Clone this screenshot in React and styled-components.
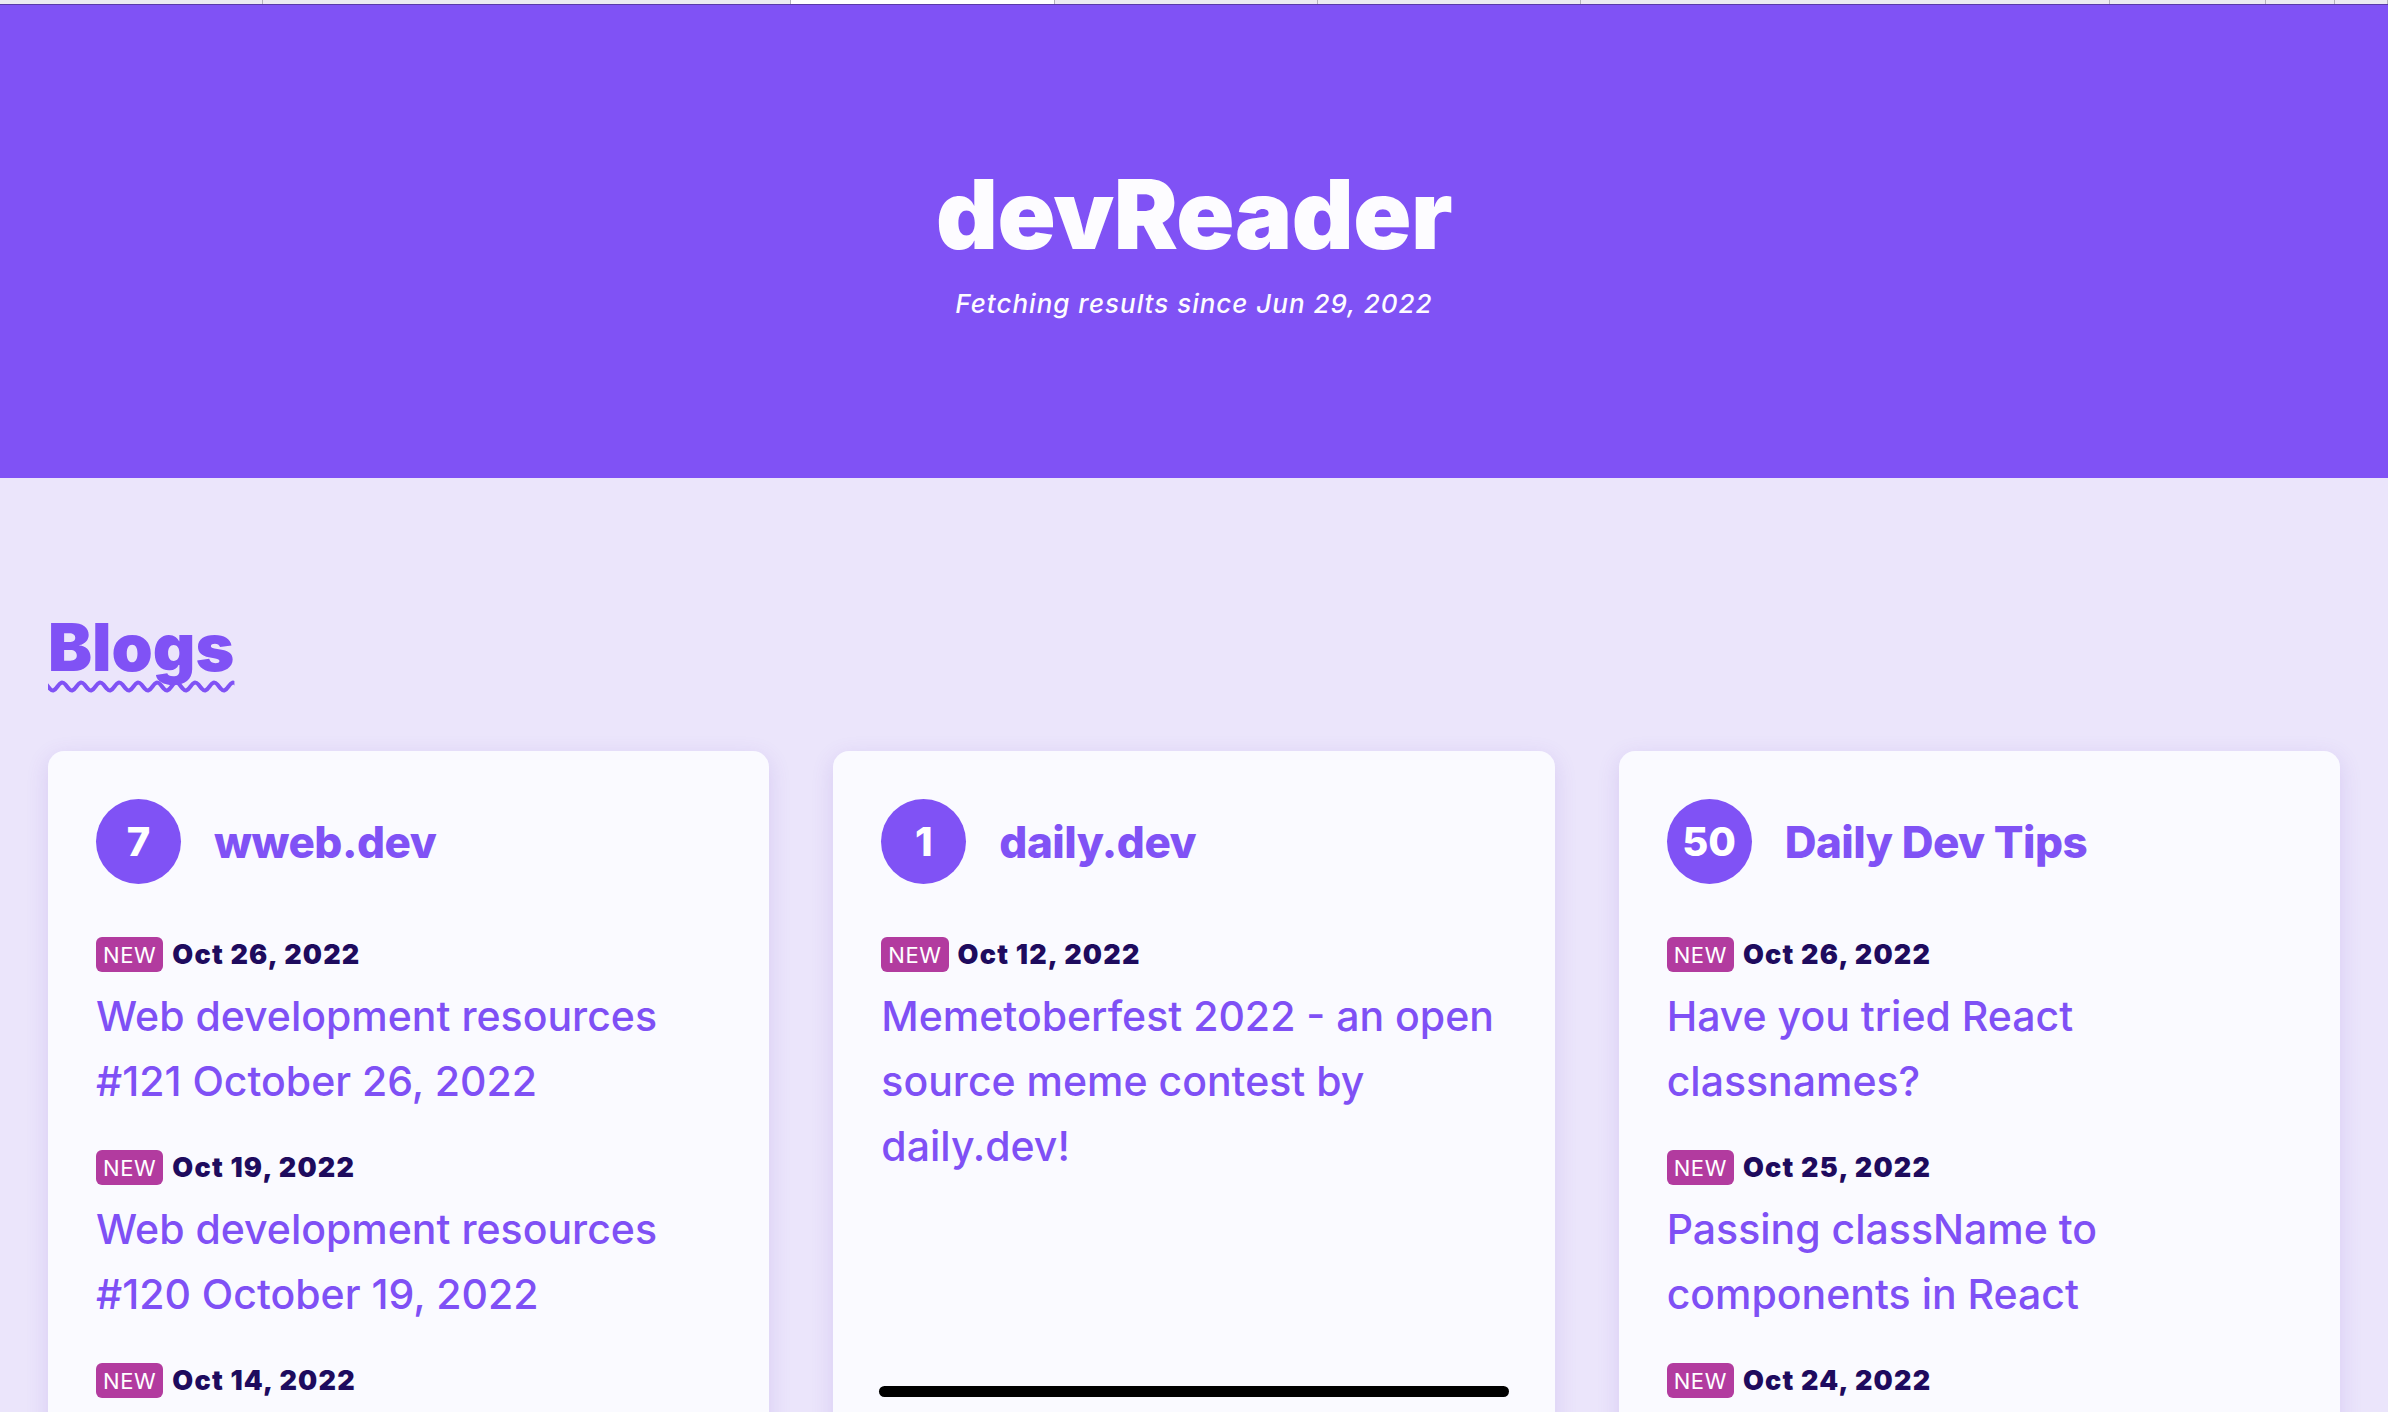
import React from 'react';
import styled, { createGlobalStyle } from 'styled-components';

const blogs = [
  {
    count: 7,
    name: 'wweb.dev',
    posts: [
      { date: 'Oct 26, 2022', title: 'Web development resources #121 October 26, 2022' },
      { date: 'Oct 19, 2022', title: 'Web development resources #120 October 19, 2022' },
      { date: 'Oct 14, 2022', title: 'Web development resources #119 October 14, 2022' },
    ],
  },
  {
    count: 1,
    name: 'daily.dev',
    scroll: true,
    posts: [
      { date: 'Oct 12, 2022', title: 'Memetoberfest 2022 - an open source meme contest by daily.dev!' },
    ],
  },
  {
    count: 50,
    name: 'Daily Dev Tips',
    posts: [
      { date: 'Oct 26, 2022', title: 'Have you tried React classnames?' },
      { date: 'Oct 25, 2022', title: 'Passing className to components in React' },
      { date: 'Oct 24, 2022', title: 'Tailwind CSS sticky footer' },
    ],
  },
];

const tabs = [263, 528, 264, 263, 263, 529, 156, 69, 53];

const App = () => {
  return (
    <>
      <GlobalStyle />
      <TabStrip>
        {tabs.map((w, i) => (
          <Tab key={i} width={w} active={i === 2} />
        ))}
      </TabStrip>
      <Header>
        <Title>devReader</Title>
        <Subtitle>Fetching results since Jun 29, 2022</Subtitle>
      </Header>
      <Main>
        <SectionTitle>Blogs</SectionTitle>
        <Grid>
          {blogs.map((blog) => (
            <Card key={blog.name}>
              <CardHeader>
                <Count>{blog.count}</Count>
                <BlogName>{blog.name}</BlogName>
              </CardHeader>
              <Posts>
                {blog.posts.map((post) => (
                  <Post key={post.title}>
                    <DateRow>
                      <Badge>NEW</Badge>
                      <PostDate>{post.date}</PostDate>
                    </DateRow>
                    <PostLink href="#">{post.title}</PostLink>
                  </Post>
                ))}
              </Posts>
              {blog.scroll && <ScrollThumb />}
            </Card>
          ))}
        </Grid>
      </Main>
    </>
  );
};

const GlobalStyle = createGlobalStyle`
    html, body {
        margin: 0;
        overflow: hidden;
        background: #ebe5fb;
        font-family: Inter, "Noto Sans", sans-serif;
    }
`

const TabStrip = styled.div`
    display: flex;
    height: 4px;
    background: #ece9f1;
    border-bottom: 1px solid #5a3aa8;
`

const Tab = styled.div`
    width: ${(p) => p.width}px;
    flex-shrink: 0;
    box-sizing: border-box;
    border-right: 1px solid #b4b2ba;
    background: ${(p) => (p.active ? '#ffffff' : 'transparent')};
`

const Header = styled.header`
    height: 473px;
    box-sizing: border-box;
    padding-top: 161px;
    background: #8052f5;
    display: flex;
    flex-direction: column;
    align-items: center;
    color: #fdfcff;
`

const Title = styled.h1`
    margin: 0;
    font-size: 96px;
    line-height: 1;
    font-weight: 900;
    letter-spacing: -0.5px;
`

const Subtitle = styled.p`
    margin: 26px 0 0;
    font-size: 26px;
    line-height: 1.2;
    font-style: italic;
    font-weight: 500;
    letter-spacing: 1px;
`

const Main = styled.main`
    padding: 136px 48px 0;
`

const SectionTitle = styled.h2`
    margin: 0;
    display: inline-block;
    font-size: 66px;
    line-height: 1;
    font-weight: 900;
    color: #8052f5;
    text-decoration: underline wavy #8052f5;
    text-decoration-thickness: 4px;
    text-decoration-skip-ink: none;
    text-underline-offset: 10px;
`

const Grid = styled.div`
    display: grid;
    grid-template-columns: repeat(3, 1fr);
    gap: 64px;
    margin-top: 71px;
`

const Card = styled.section`
    background: #fafaff;
    border-radius: 16px;
    padding: 48px;
    box-shadow: 0 6px 22px rgba(110, 70, 200, 0.16);
`

const CardHeader = styled.div`
    display: flex;
    align-items: center;
    gap: 33px;
`

const Count = styled.div`
    width: 85px;
    height: 85px;
    border-radius: 50%;
    background: #8052f5;
    color: #ffffff;
    display: flex;
    align-items: center;
    justify-content: center;
    font-size: 40px;
    font-weight: 800;
    flex-shrink: 0;
`

const BlogName = styled.div`
    font-size: 44px;
    font-weight: 800;
    color: #8052f5;
    letter-spacing: -0.5px;
`

const Posts = styled.div`
    margin-top: 53px;
    min-height: 449px;
    display: flex;
    flex-direction: column;
    gap: 36px;
`

const Post = styled.article`
    display: flex;
    flex-direction: column;
    gap: 12px;
`

const DateRow = styled.div`
    display: flex;
    align-items: center;
    gap: 9px;
`

const Badge = styled.span`
    height: 35px;
    padding: 0 7px;
    border-radius: 6px;
    background: #b23b9f;
    color: #ffffff;
    font-size: 22px;
    font-weight: 400;
    letter-spacing: 0.6px;
    display: flex;
    align-items: center;
`

const PostDate = styled.span`
    font-size: 27px;
    font-weight: 900;
    letter-spacing: 1.2px;
    color: #1e0b5e;
`

const PostLink = styled.a`
    font-size: 41px;
    line-height: 65px;
    font-weight: 500;
    color: #7f50f5;
    text-decoration: none;
`

const ScrollThumb = styled.div`
    height: 11px;
    margin: 0 -2px;
    border-radius: 6px;
    background: #000000;
`

export default App;
